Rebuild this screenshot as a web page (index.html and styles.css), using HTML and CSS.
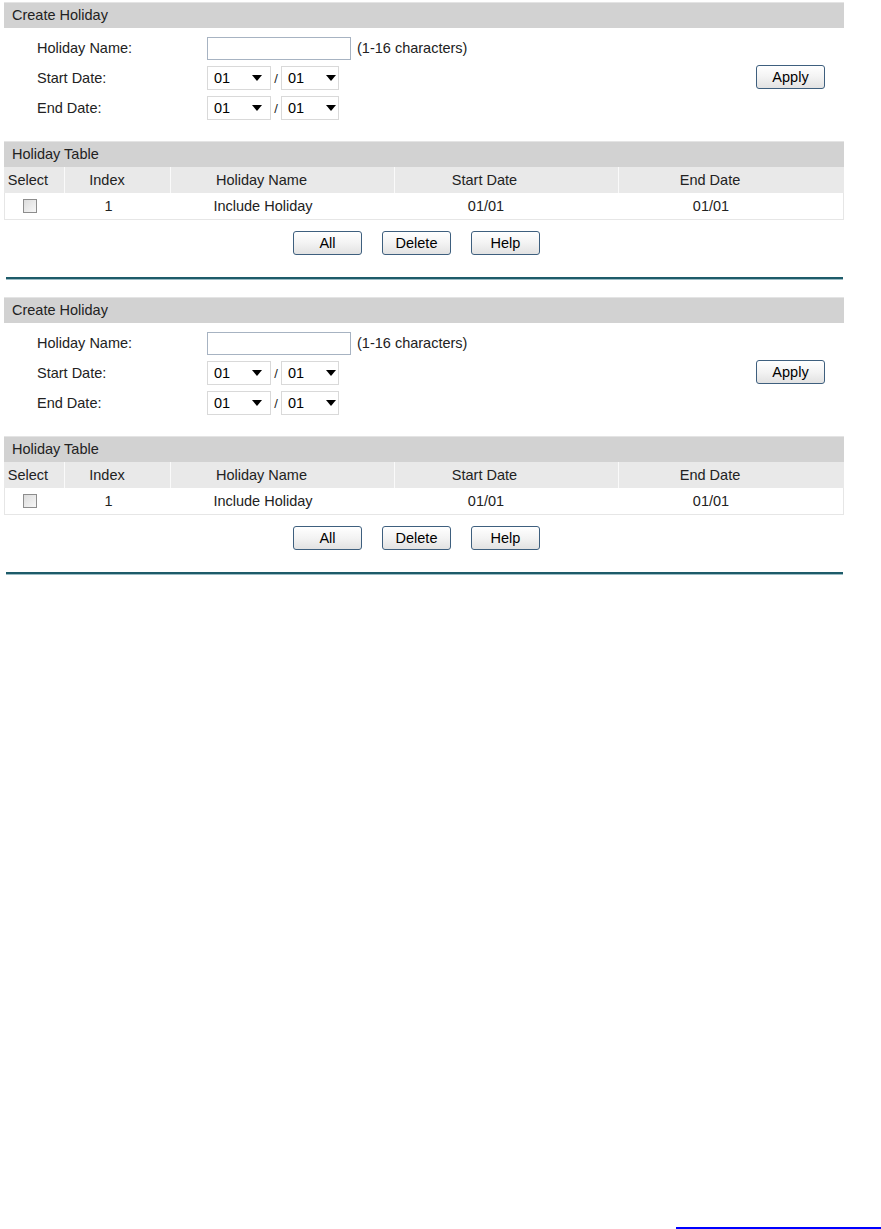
FILE: index.html
```html
<!DOCTYPE html>
<html lang="en">
<head>
    <meta charset="UTF-8">
    <meta name="viewport" content="width=device-width, initial-scale=1.0">
    <title>Holiday Config</title>
    <link rel="stylesheet" href="styles.css">
</head>
<body>

<div class="page">

    <div class="section">
        <div class="bar">Create Holiday</div>
        <div class="create">
            <div class="fields">
                <div class="row">
                    <label>Holiday Name:</label>
                    <input type="text" class="text">
                    <span class="hint">(1-16 characters)</span>
                </div>
                <div class="row">
                    <label>Start Date:</label>
                    <div class="select month"><span>01</span><svg width="10" height="6" viewBox="0 0 10 6"><path d="M0 0H10L5 6Z" fill="#000"/></svg></div>
                    <span class="slash">/</span>
                    <div class="select day"><span>01</span><svg width="10" height="6" viewBox="0 0 10 6"><path d="M0 0H10L5 6Z" fill="#000"/></svg></div>
                </div>
                <div class="row">
                    <label>End Date:</label>
                    <div class="select month"><span>01</span><svg width="10" height="6" viewBox="0 0 10 6"><path d="M0 0H10L5 6Z" fill="#000"/></svg></div>
                    <span class="slash">/</span>
                    <div class="select day"><span>01</span><svg width="10" height="6" viewBox="0 0 10 6"><path d="M0 0H10L5 6Z" fill="#000"/></svg></div>
                </div>
            </div>
            <button class="btn apply">Apply</button>
        </div>

        <div class="bar">Holiday Table</div>
        <div class="table">
            <div class="thead">
                <div class="cell c1">Select</div>
                <div class="cell c2">Index</div>
                <div class="cell c3">Holiday Name</div>
                <div class="cell c4">Start Date</div>
                <div class="cell c5">End Date</div>
            </div>
            <div class="trow">
                <div class="cell c1"><span class="check"></span></div>
                <div class="cell c2">1</div>
                <div class="cell c3">Include Holiday</div>
                <div class="cell c4">01/01</div>
                <div class="cell c5">01/01</div>
            </div>
        </div>
        <div class="actions">
            <button class="btn">All</button>
            <button class="btn">Delete</button>
            <button class="btn">Help</button>
        </div>
        <div class="divider"></div>
    </div>

    <div class="section">
        <div class="bar">Create Holiday</div>
        <div class="create">
            <div class="fields">
                <div class="row">
                    <label>Holiday Name:</label>
                    <input type="text" class="text">
                    <span class="hint">(1-16 characters)</span>
                </div>
                <div class="row">
                    <label>Start Date:</label>
                    <div class="select month"><span>01</span><svg width="10" height="6" viewBox="0 0 10 6"><path d="M0 0H10L5 6Z" fill="#000"/></svg></div>
                    <span class="slash">/</span>
                    <div class="select day"><span>01</span><svg width="10" height="6" viewBox="0 0 10 6"><path d="M0 0H10L5 6Z" fill="#000"/></svg></div>
                </div>
                <div class="row">
                    <label>End Date:</label>
                    <div class="select month"><span>01</span><svg width="10" height="6" viewBox="0 0 10 6"><path d="M0 0H10L5 6Z" fill="#000"/></svg></div>
                    <span class="slash">/</span>
                    <div class="select day"><span>01</span><svg width="10" height="6" viewBox="0 0 10 6"><path d="M0 0H10L5 6Z" fill="#000"/></svg></div>
                </div>
            </div>
            <button class="btn apply">Apply</button>
        </div>

        <div class="bar">Holiday Table</div>
        <div class="table">
            <div class="thead">
                <div class="cell c1">Select</div>
                <div class="cell c2">Index</div>
                <div class="cell c3">Holiday Name</div>
                <div class="cell c4">Start Date</div>
                <div class="cell c5">End Date</div>
            </div>
            <div class="trow">
                <div class="cell c1"><span class="check"></span></div>
                <div class="cell c2">1</div>
                <div class="cell c3">Include Holiday</div>
                <div class="cell c4">01/01</div>
                <div class="cell c5">01/01</div>
            </div>
        </div>
        <div class="actions">
            <button class="btn">All</button>
            <button class="btn">Delete</button>
            <button class="btn">Help</button>
        </div>
        <div class="divider"></div>
    </div>

    <a class="footLink" href="#"></a>
</div>

</body>
</html>
```

FILE: styles.css
```css
body {
    font-family: "Liberation Sans", Arial, sans-serif;
    font-size: 14.5px;
    color: #222;
    margin: 0;
    padding: 0;
    background: #fff;
}
.page {
    padding: 2px 0 0 4px;
    width: 840px;
}
.section {
    margin-bottom: 17px;
}
.bar {
    height: 25px;
    line-height: 25px;
    border-top: 1px solid #e4e4e4;
    background: #d2d2d2;
    padding-left: 8px;
}
.create {
    display: flex;
    justify-content: space-between;
    align-items: flex-start;
    padding: 5px 0 18px 0;
}
.fields {
    display: flex;
    flex-direction: column;
}
.row {
    display: flex;
    align-items: center;
    height: 30px;
    padding-left: 33px;
}
.row label {
    width: 170px;
}
.text {
    width: 144px;
    height: 23px;
    box-sizing: border-box;
    border: 1px solid #a7b3c2;
    margin: 0;
    padding: 0 4px;
    font: inherit;
}
.hint {
    margin-left: 6px;
}
.select {
    display: flex;
    align-items: center;
    height: 24px;
    box-sizing: border-box;
    border: 1px solid #d9d9d9;
    background: #fff;
    padding-left: 6px;
    color: #000;
}
.select svg {
    margin-left: 22px;
}
.month {
    width: 64px;
}
.day {
    width: 58px;
}
.slash {
    width: 10px;
    text-align: center;
    font-size: 13px;
}
.btn {
    width: 69px;
    height: 24px;
    box-sizing: border-box;
    border: 1px solid #3e5f7e;
    border-radius: 3px;
    background: linear-gradient(#ffffff, #f3f3f3 50%, #e2e2e2);
    font-family: "Liberation Sans", Arial, sans-serif;
    font-size: 14.5px;
    color: #000;
    padding: 0;
    cursor: pointer;
}
.apply {
    margin-top: 32px;
    margin-right: 19px;
}
.table {
    display: flex;
    flex-direction: column;
}
.thead, .trow {
    display: grid;
    grid-template-columns: 61px 106px 224px 224px 225px;
}
.thead {
    height: 26px;
    background: #e9e9e9;
}
.thead .cell {
    border-right: 1px solid #fafafa;
}
.thead .cell:last-child {
    border-right: none;
}
.trow {
    height: 26px;
    background: #fff;
    border: 1px solid #e6e6e6;
    border-top: none;
}
.cell {
    display: flex;
    align-items: center;
    justify-content: center;
}
.c1 { padding-right: 12px; }
.c2 { padding-right: 21px; }
.c3 { padding-right: 42px; }
.c4 { padding-right: 44px; }
.c5 { padding-right: 43px; }
.trow .c1 { padding-right: 11px; }
.check {
    width: 14px;
    height: 14px;
    box-sizing: border-box;
    border: 1px solid #8d8d8d;
    background: linear-gradient(135deg, #dcdcdc, #f7f7f7);
}
.actions {
    display: flex;
    justify-content: center;
    gap: 20px;
    margin-top: 11px;
    padding-right: 15px;
}
.divider {
    margin: 22px 0 0 2px;
    width: 837px;
    height: 2px;
    background: #1d5b69;
    border-bottom: 1px solid #9cbcc4;
}
.footLink {
    display: block;
    margin: 652px 0 0 672px;
    width: 205px;
    height: 2px;
    background: #0000ff;
}
```
